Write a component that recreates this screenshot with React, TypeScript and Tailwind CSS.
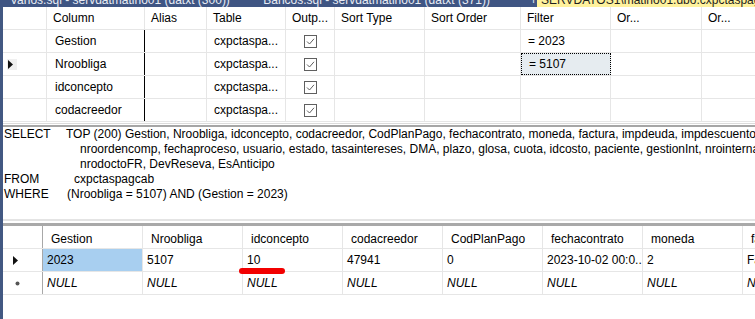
import React from 'react';

const critWidths = ['w-[98px]', 'w-[62px]', 'w-[79px]', 'w-[49px]', 'w-[90px]', 'w-[96px]', 'w-[90px]', 'w-[91px]'];
const critHeaders = ['Column', 'Alias', 'Table', 'Outp...', 'Sort Type', 'Sort Order', 'Filter', 'Or...'];

type CritRow = { column: string; filter?: string; current?: boolean };

const critRows: CritRow[] = [
    { column: 'Gestion', filter: '= 2023' },
    { column: 'Nroobliga', filter: '= 5107', current: true },
    { column: 'idconcepto' },
    { column: 'codacreedor' },
];

const resultHeaders = ['Gestion', 'Nroobliga', 'idconcepto', 'codacreedor', 'CodPlanPago', 'fechacontrato', 'moneda', 'factura'];
const resultRow = ['2023', '5107', '10', '47941', '0', '2023-10-02 00:0...', '2', 'Factura'];

const CheckBox: React.FC = () => (
    <svg width="13" height="13" viewBox="0 0 13 13">
        <rect x="0.5" y="0.5" width="12" height="12" fill="#fff" stroke="#5f5f5f" />
        <path d="M3 6.5 L5.5 9 L10 3.8" fill="none" stroke="#5f5f5f" strokeWidth="1" />
    </svg>
);

const Triangle: React.FC = () => (
    <svg width="5" height="9" viewBox="0 0 5 9">
        <path d="M0 0 L5 4.5 L0 9 Z" fill="#111" />
    </svg>
);

const CriteriaPane: React.FC = () => (
    <div className="flex flex-col">
        <div className="flex h-[23px] border-b border-[#e6e6e6]">
            <div className="w-[44px] shrink-0 border-r border-[#e6e6e6]" />
            {critHeaders.map((h, i) => (
                <div key={h + i} className={`${critWidths[i]} shrink-0 flex items-center pl-[6px] border-r border-[#e6e6e6]`}>
                    {h}
                </div>
            ))}
            <div className="flex-1 flex items-center pl-[6px]">Or...</div>
        </div>
        {critRows.map((r) => (
            <div key={r.column} className="flex h-[23px] border-b border-[#e6e6e6]">
                <div className="w-[44px] shrink-0 flex items-center pl-[4px] border-r border-[#e6e6e6]">
                    {r.current && (
                        <div className="w-[10px] h-[11px] bg-[#f0f0f0] flex items-center pl-[1px]">
                            <Triangle />
                        </div>
                    )}
                </div>
                <div className="w-[98px] shrink-0 flex items-center pl-[8px] border-r border-black">{r.column}</div>
                <div className="w-[62px] shrink-0 border-r border-[#e6e6e6]" />
                <div className="w-[79px] shrink-0 flex items-center pl-[7px] border-r border-[#e6e6e6]">cxpctaspa...</div>
                <div className="w-[49px] shrink-0 flex items-center justify-center border-r border-[#e6e6e6]">
                    <CheckBox />
                </div>
                <div className="w-[90px] shrink-0 border-r border-[#e6e6e6]" />
                <div className="w-[96px] shrink-0 border-r border-[#e6e6e6]" />
                <div
                    className={`w-[90px] shrink-0 flex items-center pl-[7px] ${
                        r.current ? 'bg-[#e6ecf0] border border-dotted border-black' : 'border-r border-[#e6e6e6]'
                    }`}
                >
                    {r.filter}
                </div>
                <div className="w-[91px] shrink-0 border-r border-[#e6e6e6]" />
                <div className="flex-1" />
            </div>
        ))}
    </div>
);

const SqlPane: React.FC = () => (
    <div className="h-[91px] leading-[15px] whitespace-nowrap overflow-hidden pl-[1px]">
        <div className="flex">
            <span className="w-[62px] shrink-0">SELECT</span>
            <span>TOP (200) Gestion, Nroobliga, idconcepto, codacreedor, CodPlanPago, fechacontrato, moneda, factura, impdeuda, impdescuento, impneto</span>
        </div>
        <div className="pl-[76px]">
            nroordencomp, fechaproceso, usuario, estado, tasaintereses, DMA, plazo, glosa, cuota, idcosto, paciente, gestionInt, nrointernacion, fechaInt
        </div>
        <div className="pl-[76px]">nrodoctoFR, DevReseva, EsAnticipo</div>
        <div className="flex">
            <span className="w-[70px] shrink-0">FROM</span>
            <span>cxpctaspagcab</span>
        </div>
        <div className="flex">
            <span className="w-[63px] shrink-0">WHERE</span>
            <span>(Nroobliga = 5107) AND (Gestion = 2023)</span>
        </div>
    </div>
);

const ResultsPane: React.FC = () => (
    <div className="relative flex flex-col whitespace-nowrap">
        <div className="flex h-[23px] border-b border-[#e6e6e6]">
            <div className="w-[40px] shrink-0 border-r border-[#a8a8a8]" />
            {resultHeaders.map((h) => (
                <div key={h} className="w-[100px] shrink-0 flex items-center pl-[8px] pt-[3px] border-r border-[#e6e6e6] overflow-hidden">
                    {h}
                </div>
            ))}
        </div>
        <div className="flex h-[23px] border-b border-[#e6e6e6]">
            <div className="w-[40px] shrink-0 flex items-center pl-[10px] border-r border-[#a8a8a8]">
                <Triangle />
            </div>
            {resultRow.map((v, i) => (
                <div
                    key={i}
                    className={`w-[100px] shrink-0 flex items-center pl-[4px] border-r border-[#e6e6e6] overflow-hidden ${
                        i === 0 ? 'bg-[#a8cff0]' : ''
                    }`}
                >
                    {v}
                </div>
            ))}
        </div>
        <div className="flex h-[23px] border-b border-[#e6e6e6]">
            <div className="w-[40px] shrink-0 flex items-center pl-[12px] border-r border-[#a8a8a8]">
                <svg width="5" height="5" viewBox="0 0 5 5">
                    <circle cx="2.5" cy="2.5" r="2" fill="#555" />
                </svg>
            </div>
            {resultHeaders.map((h) => (
                <div key={h} className="w-[100px] shrink-0 flex items-center pl-[4px] italic border-r border-[#e6e6e6]">
                    NULL
                </div>
            ))}
        </div>
        <div className="absolute left-[236px] top-[42px] w-[46px] h-[6px] rounded-full bg-[#f20000]" />
    </div>
);

export default function App() {
    return (
        <div className="w-[755px] h-[319px] overflow-hidden bg-white text-black text-[12px] font-['Liberation_Sans',Arial,sans-serif] flex flex-col">
            <div className="h-[7px] shrink-0 overflow-hidden bg-[#3f5583] flex whitespace-nowrap leading-[14px]">
                <div className="w-[537px] shrink-0 flex text-[#e8ecf4] -mt-[7px]">
                    <span className="pl-[10px] w-[273px]">Varios.sql - servdatmatino01 (datxt (300))</span>
                    <span>Bancos.sql - servdatmatino01 (datxt (371))</span>
                    <span className="pl-[40px]">+</span>
                </div>
                <div className="flex-1 bg-[#fff29d] text-[#1e1e1e] pl-[4px] -mt-[7px] h-[21px] leading-[14px] pt-0">
                    SERVDATOS1\matino01.dbo.cxpctaspagcab
                </div>
            </div>
            <div className="flex-1 flex flex-col border-l-[3px] border-[#425882]">
                <CriteriaPane />
                <div className="h-[5px] shrink-0 flex flex-col">
                    <div className="h-px mt-px bg-[#dcdcdc]" />
                    <div className="h-[2px] mt-px bg-[#a6a6a6]" />
                </div>
                <SqlPane />
                <div className="h-[8px] shrink-0 flex flex-col">
                    <div className="h-[2px] mt-px bg-[#e4e4e4]" />
                    <div className="h-[3px] mt-[2px] bg-[#a9a9a9]" />
                </div>
                <ResultsPane />
            </div>
        </div>
    );
}
